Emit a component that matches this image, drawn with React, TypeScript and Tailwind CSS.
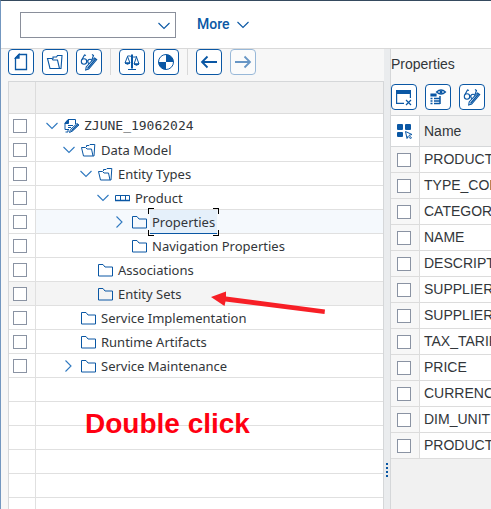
import React from "react";

type IconProps = { className?: string };

const iconBase = "block shrink-0";

function ChevronDown({ className = "text-[#2f79c0]" }: IconProps) {
  return (
    <svg width="12" height="8" viewBox="0 0 12 8" fill="none" stroke="currentColor" strokeWidth="1.1" className={`${iconBase} ${className}`} aria-hidden="true">
      <path d="M.5 1 6 6.5 11.5 1" />
    </svg>
  );
}

function ChevronRight() {
  return (
    <svg width="12" height="12" viewBox="0 0 12 12" fill="none" stroke="currentColor" strokeWidth="1.1" className={`${iconBase} text-[#2f79c0]`} aria-hidden="true">
      <path d="M2.5.5 8 6 2.5 11.5" />
    </svg>
  );
}

function FolderIcon() {
  return (
    <svg width="16" height="14" viewBox="0 0 16 14" fill="none" stroke="#0a57a4" strokeWidth="1" className={iconBase} aria-hidden="true">
      <path d="M.5 13V1.500H5l2 2.500h7.500v9z" />
    </svg>
  );
}

function OpenFolderIcon() {
  return (
    <svg width="16" height="14" viewBox="0 0 16 14" fill="none" stroke="#0a57a4" strokeWidth="1" className={iconBase} aria-hidden="true">
      <path d="M2.500 13H12l-1.500-7H6L4.500 4.500h-4z" />
      <path d="M5.500 4V2.500H8L9 1.500h4.800L13 13h-1" />
    </svg>
  );
}

function EntityIcon() {
  return (
    <svg width="16" height="14" viewBox="0 0 16 14" fill="none" stroke="#0a57a4" strokeWidth="1" className={iconBase} aria-hidden="true">
      <path d="M.5 4.500h14v5H.5zM5.500 4.500v5M10.500 4.500v5" />
      <path d="M0 9.500h15" strokeWidth="1.500" />
    </svg>
  );
}

function ProjectIcon() {
  return (
    <svg width="16" height="14" viewBox="0 0 16 14" fill="none" stroke="#0a57a4" strokeWidth="1" className={iconBase} aria-hidden="true">
      <path d="M4 10.500V13H1.500M1 10.500V4l3-3.500h7.500V5M1 10.500h4M4 6.500h5M4 8.500h3" />
      <path d="M1 4.500 4.500.5v4z" fill="#0a57a4" />
      <path d="M13 4.500 15 6 8.500 12 5.500 13.500l1-3z" fill="#fff" />
      <path d="m14 5.300-6.500 6.400" strokeWidth="1.400" />
    </svg>
  );
}

function DocumentIcon() {
  return (
    <svg width="16" height="18" viewBox="0 0 16 18" fill="none" stroke="#0a57a4" strokeWidth="1.300" aria-hidden="true">
      <path d="M6 1.500h7.500v15h-11V5z" />
      <path d="M6 1.500V5H2.500z" fill="#0a57a4" />
    </svg>
  );
}

function OpenIcon() {
  return (
    <svg width="18" height="16" viewBox="0 0 18 16" fill="none" stroke="#0a57a4" strokeWidth="1.100" aria-hidden="true">
      <path d="M4 14.500h9.500l-2-8.500H7L6 4.500H1.500z" />
      <path d="M7 5V3h3.500l1-1.500H16l-1 13h-1.500" />
    </svg>
  );
}

function GlassesPencilIcon() {
  return (
    <svg width="18" height="18" viewBox="0 0 18 18" fill="none" stroke="#0a57a4" strokeWidth="1.100" aria-hidden="true">
      <circle cx="4" cy="8.500" r="2.700" />
      <circle cx="10" cy="8.500" r="2.200" />
      <path d="M6.500 8h1.500M2 6.500l2.500-4.500 1.500.5M12 6.500l1.500-4L12 1.500" />
      <path d="m14.500 5 2.200 1.700-8 9.300-3 1 .5-3z" fill="#fff" />
      <path d="m15.500 6-8 9.500" strokeWidth="1.400" />
    </svg>
  );
}

function ScalesIcon() {
  return (
    <svg width="18" height="18" viewBox="0 0 18 18" fill="none" stroke="#0a57a4" strokeWidth="1" aria-hidden="true">
      <path d="M9 1.500v14" strokeWidth="2" />
      <path d="M5 16.500h8M4 3.500c3-2 5 2 10 0M4.500 3.500 2 10h5zM13.500 4 11 11h5z" />
      <path d="M2 10q2.500 2.500 5 0zM11 11q2.500 2.500 5 0z" fill="#0a57a4" />
    </svg>
  );
}

function ActivateIcon() {
  return (
    <svg width="18" height="18" viewBox="0 0 18 18" aria-hidden="true">
      <circle cx="9" cy="9" r="7.500" fill="#fff" stroke="#0a57a4" />
      <path d="M9 1.500A7.500 7.500 0 0 1 16.500 9H9zM9 16.500A7.500 7.500 0 0 1 1.500 9H9z" fill="#0a57a4" />
    </svg>
  );
}

function ArrowLeftIcon() {
  return (
    <svg width="18" height="14" viewBox="0 0 18 14" fill="none" stroke="#0a57a4" strokeWidth="1.800" aria-hidden="true">
      <path d="M17 7H2M7.500 1.500 2 7l5.500 5.500" />
    </svg>
  );
}

function ArrowRightIcon() {
  return (
    <svg width="18" height="14" viewBox="0 0 18 14" fill="none" stroke="#0a57a4" strokeWidth="1.800" aria-hidden="true">
      <path d="M1 7h15M10.500 1.500 16 7l-5.500 5.500" />
    </svg>
  );
}

function DeleteRowIcon() {
  return (
    <svg width="18" height="18" viewBox="0 0 18 18" fill="none" stroke="#0a57a4" strokeWidth="1.200" aria-hidden="true">
      <path d="M1 2h15v4H1z" fill="#0a57a4" stroke="none" />
      <path d="M1.600 5v10.400H9M15.400 5v5M11 12l5 5M16 12l-5 5" />
    </svg>
  );
}

function ViewDetailsIcon() {
  return (
    <svg width="18" height="18" viewBox="0 0 18 18" fill="none" stroke="#0a57a4" strokeWidth="1.200" aria-hidden="true">
      <path d="M2 6h5v2H2z" fill="#0a57a4" />
      <path d="M1.500 10.500h2M5 10.500h6M1.500 13h2M5 13h6M1.500 15.500h2M5 15.500h6M11 8v8" strokeWidth="1.500" />
      <path d="M7.500 4Q12 0 16.500 4 12 8 7.500 4z" />
      <circle cx="12" cy="4" r="1.500" fill="#0a57a4" stroke="none" />
    </svg>
  );
}

function SelectAllIcon() {
  return (
    <svg width="16" height="16" viewBox="0 0 16 16" fill="#0a57a4" aria-hidden="true">
      <rect x="0" y="1" width="6" height="6" rx="1" />
      <rect x="8" y="1" width="6" height="6" rx="1" />
      <rect x="0" y="9" width="6" height="5" rx="1" />
      <path d="m8.500 8.500 6.500 3-3 .8 2.500 2.700-1 .8-2.500-2.500-1 2.200z" fill="none" stroke="#0a57a4" />
    </svg>
  );
}

function ToolButton({ label, disabled, children }: { label: string; disabled?: boolean; children: React.ReactNode }) {
  return (
    <button
      type="button"
      aria-label={label}
      disabled={disabled}
      className="flex size-[26px] shrink-0 items-center justify-center rounded-[4px] border border-[#0a57a4] bg-white disabled:border-[#5a8fc4] disabled:opacity-60"
    >
      {children}
    </button>
  );
}

function Separator() {
  return <div className="h-[26px] w-px shrink-0 bg-[#d9d9d9]" />;
}

function Check({ label }: { label: string }) {
  return <input type="checkbox" aria-label={label} className="block size-[14px] appearance-none border border-[#8a93a3] bg-white" />;
}

type TreeNode = {
  name: string;
  level: number;
  icon: "project" | "open" | "folder" | "entity";
  state?: "expanded" | "collapsed";
  selected?: boolean;
  hovered?: boolean;
};

const tree: TreeNode[] = [
  { name: "ZJUNE_19062024", level: 0, icon: "project", state: "expanded" },
  { name: "Data Model", level: 1, icon: "open", state: "expanded" },
  { name: "Entity Types", level: 2, icon: "open", state: "expanded" },
  { name: "Product", level: 3, icon: "entity", state: "expanded" },
  { name: "Properties", level: 4, icon: "folder", state: "collapsed", selected: true },
  { name: "Navigation Properties", level: 4, icon: "folder" },
  { name: "Associations", level: 2, icon: "folder" },
  { name: "Entity Sets", level: 2, icon: "folder", hovered: true },
  { name: "Service Implementation", level: 1, icon: "folder" },
  { name: "Runtime Artifacts", level: 1, icon: "folder" },
  { name: "Service Maintenance", level: 1, icon: "folder", state: "collapsed" },
];

const indents = ["pl-[10px]", "pl-[27px]", "pl-[44px]", "pl-[61px]", "pl-[78px]"];

const icons = {
  project: <ProjectIcon />,
  open: <OpenFolderIcon />,
  folder: <FolderIcon />,
  entity: <EntityIcon />,
};

const emptyRows = [1, 2, 3, 4, 5, 6];

const properties = [
  "PRODUCT_ID",
  "TYPE_CODE",
  "CATEGORY",
  "NAME",
  "DESCRIPTION",
  "SUPPLIER_ID",
  "SUPPLIER_NAME",
  "TAX_TARIF_CODE",
  "PRICE",
  "CURRENCY_CODE",
  "DIM_UNIT",
  "PRODUCT_PIC_URL",
];

function NodeLabel({ node }: { node: TreeNode }) {
  if (node.selected) {
    return (
      <span className="relative -mb-px -ml-0.5 flex h-6 items-center border-b border-[#0a57a4] bg-[#e5f0fa] px-0.5">
        {node.name}
        <span className="absolute -left-0.5 -top-0.5 size-[6px] border-l border-t border-black" />
        <span className="absolute -right-0.5 -top-0.5 size-[6px] border-r border-t border-black" />
        <span className="absolute -bottom-[3px] -left-0.5 size-[6px] border-b border-l border-black" />
        <span className="absolute -bottom-[3px] -right-0.5 size-[6px] border-b border-r border-black" />
      </span>
    );
  }
  if (node.level === 0) {
    return <span className="font-['DejaVu_Sans_Mono',monospace] text-[13px]">{node.name}</span>;
  }
  return <span>{node.name}</span>;
}

function TreeRow({ node }: { node: TreeNode }) {
  const tone = node.selected ? "bg-[#f5f9fd]" : node.hovered ? "bg-[#f4f4f4]" : "bg-white";
  return (
    <tr>
      <td className={`h-6 border-b border-r border-[#e0e0e0] p-0 pl-1 ${node.hovered ? "bg-[#f4f4f4]" : "bg-white"}`}>
        <Check label={`Select ${node.name}`} />
      </td>
      <td className={`h-6 border-b border-[#e0e0e0] p-0 ${tone}`}>
        <div className={`flex h-[23px] items-center whitespace-nowrap ${indents[node.level]}`}>
          <div className="flex w-[18px] shrink-0 items-center">
            {node.state && (
              <button type="button" aria-label={`Toggle ${node.name}`}>
                {node.state === "expanded" ? <ChevronDown /> : <ChevronRight />}
              </button>
            )}
          </div>
          <div className="w-5 shrink-0">{icons[node.icon]}</div>
          <NodeLabel node={node} />
        </div>
      </td>
    </tr>
  );
}

function TreePanel() {
  return (
    <section className="flex min-w-0 flex-1 flex-col overflow-hidden bg-[#f7f7f7] pl-[7px]">
      <div className="flex shrink-0 gap-2 pb-[6px]">
        <ToolButton label="Create"><DocumentIcon /></ToolButton>
        <ToolButton label="Open"><OpenIcon /></ToolButton>
        <ToolButton label="Display or change"><GlassesPencilIcon /></ToolButton>
        <Separator />
        <ToolButton label="Check consistency"><ScalesIcon /></ToolButton>
        <ToolButton label="Generate"><ActivateIcon /></ToolButton>
        <Separator />
        <ToolButton label="Back"><ArrowLeftIcon /></ToolButton>
        <ToolButton label="Forward" disabled><ArrowRightIcon /></ToolButton>
      </div>
      <div className="relative min-h-0 flex-1 overflow-hidden border-l border-r border-t border-[#d5d7d9] bg-white">
        <table className="w-full table-fixed border-separate border-spacing-0 text-left font-['Noto_Sans',sans-serif] text-[13px] leading-5">
          <colgroup>
            <col className="w-[27px]" />
            <col />
          </colgroup>
          <thead>
            <tr>
              <th className="h-8 border-b border-r border-[#dcdcdc] bg-[#f1f1f1] p-0" aria-label="Selection" />
              <th className="h-8 border-b border-[#dcdcdc] bg-[#f1f1f1] p-0" aria-label="Object" />
            </tr>
          </thead>
          <tbody>
            {tree.map((node) => (
              <TreeRow key={node.name} node={node} />
            ))}
            {emptyRows.map((row) => (
              <tr key={row}>
                <td className="h-6 border-b border-r border-[#e0e0e0] p-0" />
                <td className="h-6 border-b border-[#e0e0e0] p-0" />
              </tr>
            ))}
          </tbody>
        </table>
        <svg width="116" height="26" viewBox="0 0 116 26" className="absolute left-[202px] top-[208px]" aria-hidden="true">
          <path d="M0 7 15 1.500V6.500L114 19.500 113.500 24 14.500 11.500 13.500 16z" fill="#f71f26" />
        </svg>
        <p className="absolute left-[76px] top-[326px] font-['Liberation_Sans',Arial,sans-serif] text-[28px] font-bold leading-8 text-[#ff0012]">
          Double click
        </p>
      </div>
    </section>
  );
}

function PropertiesPanel() {
  return (
    <section className="flex w-[101px] shrink-0 flex-col overflow-hidden border-l border-[#d5d7d9] bg-[#f1f1f1] font-['Liberation_Sans',Arial,sans-serif] text-[14px]">
      <div className="bg-[#f7f7f7]">
        <h2 className="h-[35px] leading-[30px]">Properties</h2>
        <div className="flex gap-2 pb-[5px]">
          <ToolButton label="Delete row"><DeleteRowIcon /></ToolButton>
          <ToolButton label="Details"><ViewDetailsIcon /></ToolButton>
          <ToolButton label="Display or change"><GlassesPencilIcon /></ToolButton>
        </div>
      </div>
      <table className="w-[240px] table-fixed border-separate border-spacing-0 border-t border-[#d5d7d9] text-left">
        <colgroup>
          <col className="w-[29px]" />
          <col />
        </colgroup>
        <thead>
          <tr>
            <th className="h-[31px] border-b border-r border-[#d5d7d9] bg-white p-0">
              <button type="button" aria-label="Select all" className="block pl-[6px]"><SelectAllIcon /></button>
            </th>
            <th className="h-[31px] border-b border-[#d5d7d9] bg-[#f1f1f1] p-0 pl-1 font-normal">Name</th>
          </tr>
        </thead>
        <tbody>
          {properties.map((name) => (
            <tr key={name}>
              <td className="h-[26px] border-b border-r border-[#dcdcdc] bg-[#f7f7f7] p-0 pl-[6px]">
                <Check label={`Select ${name}`} />
              </td>
              <td className="h-[26px] border-b border-[#dcdcdc] bg-white p-0 pl-1">{name}</td>
            </tr>
          ))}
        </tbody>
      </table>
    </section>
  );
}

export default function App() {
  return (
    <div className="flex h-screen flex-col overflow-hidden border-l border-t border-l-[#7397c0] border-t-[#354a5f] bg-white text-[#32363a]">
      <header className="flex h-12 shrink-0 items-center gap-[21px] border-b border-[#d9d9d9] pl-[19px]">
        <div className="relative">
          <select aria-label="Command" className="block h-[26px] w-[156px] appearance-none border border-[#8a8f9b] bg-white px-2 text-sm">
            <option />
          </select>
          <ChevronDown className="pointer-events-none absolute right-[6px] top-[10px] text-[#0a57a4]" />
        </div>
        <button type="button" className="flex items-center gap-[7px] font-[Roboto,sans-serif] text-[14px] font-medium text-[#0a57a4]">
          More
          <ChevronDown className="text-[#0a57a4]" />
        </button>
      </header>
      <main className="flex min-h-0 flex-1">
        <TreePanel />
        <div role="separator" className="flex w-[6px] shrink-0 flex-col items-center bg-[#eaecee] pt-[414px]">
          <div className="flex flex-col gap-[2px]">
            <span className="size-[2px] bg-[#0a57a4]" />
            <span className="size-[2px] bg-[#0a57a4]" />
            <span className="size-[2px] bg-[#0a57a4]" />
            <span className="size-[2px] bg-[#0a57a4]" />
          </div>
        </div>
        <PropertiesPanel />
      </main>
    </div>
  );
}
